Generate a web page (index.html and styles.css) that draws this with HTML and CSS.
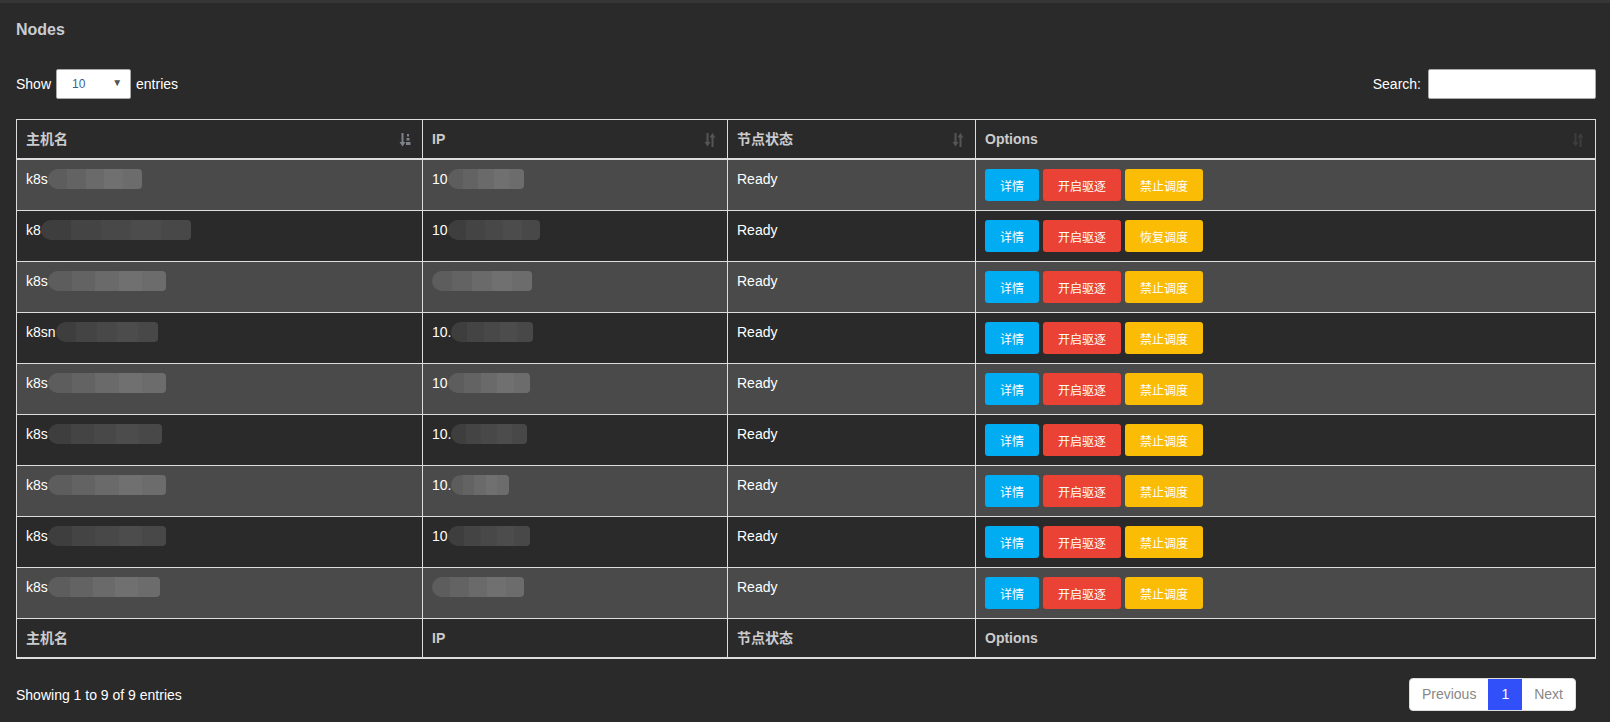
FILE: index.html
```html
<!DOCTYPE html>
<html lang="en">
<head>
    <meta charset="UTF-8">
    <title>Nodes</title>
    <link rel="stylesheet" href="styles.css">
</head>
<body>
    <div class="panel">
        <h3 class="panel-title">Nodes</h3>

        <div class="table-top">
            <label class="length">Show
                <span class="select-wrap">
                    <select>
                        <option>10</option>
                        <option>25</option>
                        <option>50</option>
                    </select>
                </span>
                entries</label>
            <label class="search">Search: <input type="search"></label>
        </div>

        <table class="nodes">
            <thead>
                <tr>
                    <th class="c-name">主机名
                        <svg class="sort asc" viewBox="0 0 12 14"><path d="M2.5 0h2v9h2l-3 4.5-3-4.5h2z"/><path d="M8 1h2v2.5H8zM7.5 5h3v2.5h-3zM7 9h4.5v3H7z"/></svg>
                    </th>
                    <th class="c-ip">IP
                        <svg class="sort" viewBox="0 0 12 14"><path d="M2.5 0h2v9h2l-3 4.5-3-4.5h2z"/><path d="M7.5 14h2V4.5h2L8.5 0l-3 4.5h2z"/></svg>
                    </th>
                    <th class="c-state">节点状态
                        <svg class="sort" viewBox="0 0 12 14"><path d="M2.5 0h2v9h2l-3 4.5-3-4.5h2z"/><path d="M7.5 14h2V4.5h2L8.5 0l-3 4.5h2z"/></svg>
                    </th>
                    <th class="c-opt">Options
                        <svg class="sort faint" viewBox="0 0 12 14"><path d="M2.5 0h2v9h2l-3 4.5-3-4.5h2z"/><path d="M7.5 14h2V4.5h2L8.5 0l-3 4.5h2z"/></svg>
                    </th>
                </tr>
            </thead>
            <tbody>
                <tr>
                    <td>k8s<span class="blur" style="width:94px"></span></td>
                    <td>10<span class="blur" style="width:76px"></span></td>
                    <td>Ready</td>
                    <td><button class="btn info">详情</button><button class="btn danger">开启驱逐</button><button class="btn warn">禁止调度</button></td>
                </tr>
                <tr>
                    <td>k8<span class="blur" style="width:150px"></span></td>
                    <td>10<span class="blur" style="width:92px"></span></td>
                    <td>Ready</td>
                    <td><button class="btn info">详情</button><button class="btn danger">开启驱逐</button><button class="btn warn">恢复调度</button></td>
                </tr>
                <tr>
                    <td>k8s<span class="blur" style="width:118px"></span></td>
                    <td><span class="blur" style="width:100px"></span></td>
                    <td>Ready</td>
                    <td><button class="btn info">详情</button><button class="btn danger">开启驱逐</button><button class="btn warn">禁止调度</button></td>
                </tr>
                <tr>
                    <td>k8sn<span class="blur" style="width:102px"></span></td>
                    <td>10.<span class="blur" style="width:82px"></span></td>
                    <td>Ready</td>
                    <td><button class="btn info">详情</button><button class="btn danger">开启驱逐</button><button class="btn warn">禁止调度</button></td>
                </tr>
                <tr>
                    <td>k8s<span class="blur" style="width:118px"></span></td>
                    <td>10<span class="blur" style="width:82px"></span></td>
                    <td>Ready</td>
                    <td><button class="btn info">详情</button><button class="btn danger">开启驱逐</button><button class="btn warn">禁止调度</button></td>
                </tr>
                <tr>
                    <td>k8s<span class="blur" style="width:114px"></span></td>
                    <td>10.<span class="blur" style="width:76px"></span></td>
                    <td>Ready</td>
                    <td><button class="btn info">详情</button><button class="btn danger">开启驱逐</button><button class="btn warn">禁止调度</button></td>
                </tr>
                <tr>
                    <td>k8s<span class="blur" style="width:118px"></span></td>
                    <td>10.<span class="blur" style="width:58px"></span></td>
                    <td>Ready</td>
                    <td><button class="btn info">详情</button><button class="btn danger">开启驱逐</button><button class="btn warn">禁止调度</button></td>
                </tr>
                <tr>
                    <td>k8s<span class="blur" style="width:118px"></span></td>
                    <td>10<span class="blur" style="width:82px"></span></td>
                    <td>Ready</td>
                    <td><button class="btn info">详情</button><button class="btn danger">开启驱逐</button><button class="btn warn">禁止调度</button></td>
                </tr>
                <tr>
                    <td>k8s<span class="blur" style="width:112px"></span></td>
                    <td><span class="blur" style="width:92px"></span></td>
                    <td>Ready</td>
                    <td><button class="btn info">详情</button><button class="btn danger">开启驱逐</button><button class="btn warn">禁止调度</button></td>
                </tr>
            </tbody>
            <tfoot>
                <tr>
                    <th>主机名</th>
                    <th>IP</th>
                    <th>节点状态</th>
                    <th>Options</th>
                </tr>
            </tfoot>
        </table>

        <div class="table-bottom">
            <div class="info-text">Showing 1 to 9 of 9 entries</div>
            <div class="pager">
                <a href="#" class="page">Previous</a>
                <a href="#" class="page current">1</a>
                <a href="#" class="page">Next</a>
            </div>
        </div>
    </div>
</body>
</html>
```

FILE: styles.css
```css
body {
    margin: 0;
    background-color: #2a2a2a;
    border-top: 3px solid #363636;
    font-family: "Liberation Sans", Arial, "Noto Sans CJK SC", sans-serif;
    font-size: 14px;
    color: #fff;
}
.panel {
    padding: 17px 14px 20px 16px;
}
.panel-title {
    margin: 0;
    font-size: 16px;
    line-height: 20px;
    font-weight: bold;
    color: #c9ccd2;
}
.table-top {
    display: flex;
    justify-content: space-between;
    align-items: center;
    margin-top: 29px;
}
.length, .search {
    display: flex;
    align-items: center;
    gap: 5px;
}
.select-wrap {
    position: relative;
    display: inline-block;
}
.select-wrap select {
    appearance: none;
    -webkit-appearance: none;
    width: 75px;
    height: 30px;
    padding: 0 0 0 15px;
    border: 1px solid #aaa;
    border-radius: 2px;
    background: #fff;
    color: #3a5f8f;
    font-family: inherit;
    font-size: 12px;
}
.select-wrap::after {
    content: "▼";
    position: absolute;
    right: 9px;
    top: 8px;
    font-size: 10px;
    color: #555;
    pointer-events: none;
}
.search {
    gap: 7px;
}
.search input {
    box-sizing: border-box;
    width: 168px;
    height: 30px;
    border: 1px solid #aaa;
    border-radius: 2px;
    padding: 1px 4px;
    background: #fff;
}
.nodes {
    width: 100%;
    margin-top: 20px;
    border-collapse: collapse;
    border: 1px solid #ddd;
}
.nodes th, .nodes td {
    border: 1px solid #ddd;
    text-align: left;
    vertical-align: top;
}
.nodes th {
    padding: 9px 9px;
    line-height: 20px;
    font-weight: bold;
    color: #ccc;
    position: relative;
}
.nodes thead th {
    border-bottom-width: 2px;
}
.nodes tfoot th {
    border-bottom-width: 2px;
}
.c-name { width: 387px; }
.c-ip { width: 286px; }
.c-state { width: 229px; }
.nodes td {
    padding: 9px 9px;
    line-height: 20px;
    height: 32px;
    white-space: nowrap;
}
.nodes tbody tr:nth-child(odd) {
    background-color: #4a4a4a;
}
.nodes tbody tr:nth-child(even) {
    background-color: #2a2a2a;
}
.sort {
    position: absolute;
    right: 11px;
    top: 13px;
    width: 12px;
    height: 14px;
    fill: #555;
}
.sort.asc {
    fill: #7d828a;
}
.sort.faint {
    fill: #3d3d3d;
}
.blur {
    display: inline-block;
    height: 20px;
    vertical-align: middle;
    margin-top: -2px;
    border-radius: 10px 4px 4px 10px;
    background: linear-gradient(90deg, #5d5d5d 0 20%, #636363 20% 40%, #6a6a6a 40% 60%, #707070 60% 80%, #6c6c6c 80%);
}
.nodes tbody tr:nth-child(even) .blur {
    background: linear-gradient(90deg, #3e3e3e 0 20%, #444 20% 40%, #484848 40% 60%, #4c4c4c 60% 80%, #484848 80%);
}
.btn {
    height: 32px;
    padding: 0;
    margin-right: 4px;
    border: none;
    border-radius: 3px;
    color: #fff;
    font-family: inherit;
    font-size: 12px;
    cursor: pointer;
}
.btn.info { background-color: #00acf2; width: 54px; }
.btn.danger { background-color: #ea4335; width: 78px; }
.btn.warn { background-color: #fbbc05; width: 78px; }
.table-bottom {
    display: flex;
    justify-content: space-between;
    align-items: center;
    margin-top: 19px;
}
.pager {
    display: flex;
    margin-right: 20px;
    background: #fff;
    border: 1px solid #ddd;
    border-radius: 4px;
    overflow: hidden;
}
.page {
    display: block;
    height: 31px;
    line-height: 31px;
    padding: 0 12px;
    color: #888;
    text-decoration: none;
    font-size: 14px;
}
.page.current {
    background-color: #3150fa;
    color: #fff;
    padding: 0 13px;
}
```
